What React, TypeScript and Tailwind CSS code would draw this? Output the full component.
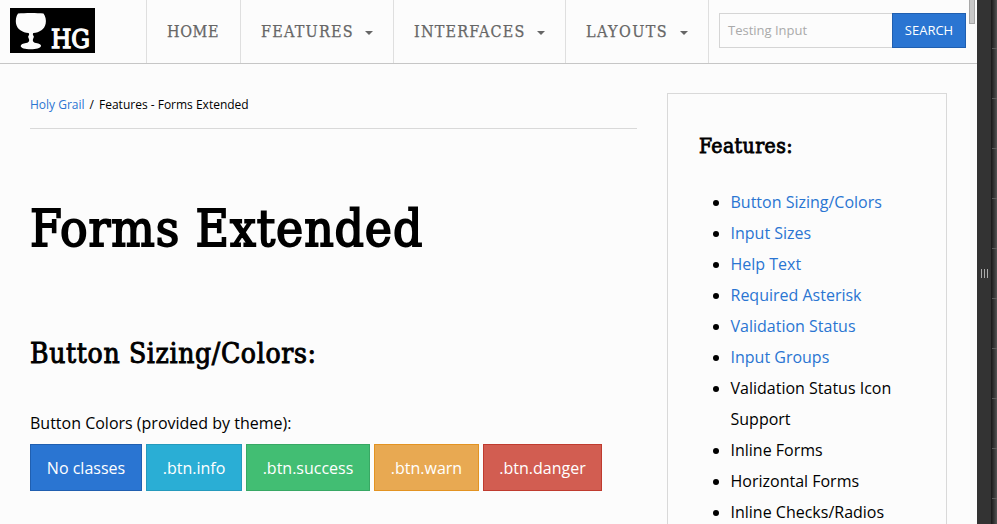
import React from "react";

const slab = "font-['Roboto_Slab','DejaVu_Serif_Condensed','DejaVu_Serif',serif] font-stretch-semi-condensed";

const nav = [
  { label: "HOME", box: "w-[94px]", text: "tracking-[0.6px]", menu: false },
  { label: "FEATURES", box: "w-[153px]", text: "tracking-[1.25px]", menu: true },
  { label: "INTERFACES", box: "w-[172px]", text: "tracking-[1.2px]", menu: true },
  { label: "LAYOUTS", box: "w-[143px]", text: "tracking-[1.4px]", menu: true },
];

const features = [
  { label: "Button Sizing/Colors", link: true },
  { label: "Input Sizes", link: true },
  { label: "Help Text", link: true },
  { label: "Required Asterisk", link: true },
  { label: "Validation Status", link: true },
  { label: "Input Groups", link: true },
  { label: "Validation Status Icon Support", link: false },
  { label: "Inline Forms", link: false },
  { label: "Horizontal Forms", link: false },
  { label: "Inline Checks/Radios", link: false },
];

const buttons = [
  { label: "No classes", style: "w-28 bg-[#2a75d2] border-[#205fb0]" },
  { label: ".btn.info", style: "w-24 bg-[#2aaed5] border-[#259abc]" },
  { label: ".btn.success", style: "w-[124px] bg-[#42be73] border-[#38a864]" },
  { label: ".btn.warn", style: "w-[105px] bg-[#e8a952] border-[#e39322]" },
  { label: ".btn.danger", style: "w-[119px] bg-[#d25d51] border-[#bf3b2f]" },
];

function Logo() {
  return (
    <div className="relative ml-[10px] mt-2 h-[45px] w-[85px] shrink-0 bg-black text-[#fcfcfc]">
      <svg className="absolute left-0 top-0" width="42" height="45" viewBox="0 0 42 45" fill="currentColor">
        <path d="M8 5.5C15 4.7 27 4.7 33.5 5.5C35.5 8.5 36.4 12 35.7 15.5C34.6 21.5 29.5 24.5 23.3 25C22.4 26.4 23 27 23.8 28.2C24 29.6 23 30.5 22.8 32C22.8 33.8 24 34.7 26 35C29.5 35.5 31.2 36.7 31 38C30.5 40.2 26 41.3 20.8 41.3C15 41.3 10.7 40 10.7 38C10.7 36.5 13 35.4 16 35C18 34.7 19.2 33.8 19.2 32C19 30.5 18 29.6 18.2 28.2C19 27 19.6 26.4 18.6 25C12.5 24.5 7 21.5 6 15.5C5.5 12 6 8.5 8 5.5Z" />
      </svg>
      <span className={`${slab} absolute left-[41px] top-[19px] text-[26px] leading-[25px] tracking-[-0.2px] [-webkit-text-stroke:1.3px_#fcfcfc]`}>HG</span>
    </div>
  );
}

function Caret() {
  return (
    <svg className="mt-[2px] shrink-0" width="8" height="4" viewBox="0 0 8 4" fill="#666">
      <path d="M0 0H8L4 4Z" />
    </svg>
  );
}

export default function App() {
  return (
    <div className="flex h-[524px] w-[997px] overflow-hidden bg-[#fcfcfc] font-['Open_Sans',sans-serif] text-base text-black">
      <div className="relative w-[977px] shrink-0">
        <header className="flex h-16 border-b border-[#c6c6c6]">
          <div className="w-[146px] shrink-0"><Logo /></div>
          <nav className={`${slab} flex border-r border-[#dfdfdf] text-[#666]`}>
            {nav.map((n) => (
              <a key={n.label} className={`${n.box} flex items-center justify-between border-l border-[#dfdfdf] pl-5 pr-5`}>
                <span className={`${n.text} whitespace-nowrap text-base [-webkit-text-stroke:0.25px_#666]`}>{n.label}</span>
                {n.menu && <Caret />}
              </a>
            ))}
          </nav>
          <div className="ml-[10px] mt-[13px] flex h-[35px]">
            <div className="flex w-[173px] items-center border border-r-0 border-[#d5d5d5] pl-2 text-[13px] text-[#aaa]">Testing Input</div>
            <div className="flex w-[74px] items-center justify-center border border-[#205fb0] bg-[#2a75d2] pt-px text-[13px] text-white">SEARCH</div>
          </div>
        </header>
        <div className="absolute right-[2px] top-[-2px] h-[26px] w-[6px] border border-[#a8a8a8] bg-[#c9c9c9]" />
        <main className="flex gap-[30px] pl-[30px] pt-[29px]">
          <section className="w-[607px]">
            <div className="flex h-9 items-start gap-[5px] border-b border-[#d9d9d9] pt-[3px] text-xs leading-[18px]">
              <a className="text-[#2a75d2]">Holy Grail</a><span>/</span><span>Features - Forms Extended</span>
            </div>
            <h1 className={`${slab} mt-[66px] whitespace-nowrap text-[51px] leading-[68px] tracking-[0.9px] [-webkit-text-stroke:1.8px_black]`}>Forms Extended</h1>
            <h2 className={`${slab} mt-[70px] whitespace-nowrap text-[28px] leading-[42px] tracking-[0.65px] [-webkit-text-stroke:0.9px_black]`}>Button Sizing/Colors:</h2>
            <p className="mt-[33px] leading-[31px]">Button Colors (provided by theme):</p>
            <div className="mt-[5px] flex gap-1">
              {buttons.map((b) => (
                <button key={b.label} className={`${b.style} h-[47px] border text-center text-white`}>{b.label}</button>
              ))}
            </div>
          </section>
          <aside className="h-[480px] w-[280px] border border-[#d9d9d9] pl-[31px] pr-[30px] pt-[35px]">
            <h3 className={`${slab} whitespace-nowrap text-[21px] leading-[34px] tracking-[0.4px] [-webkit-text-stroke:0.8px_black]`}>Features:</h3>
            <ul className="mt-6 list-disc pl-[31.5px] leading-[31px]">
              {features.map((f) => (
                <li key={f.label}>{f.link ? <a className="text-[#2a75d2]">{f.label}</a> : f.label}</li>
              ))}
            </ul>
          </aside>
        </main>
      </div>
      <div className="flex w-[14px] shrink-0 items-start justify-center gap-[2px] bg-[#333] pt-[269px]">
        <i className="h-[9px] w-px bg-[#aaa]" /><i className="h-[9px] w-px bg-[#aaa]" /><i className="h-[9px] w-px bg-[#aaa]" />
      </div>
      <div className="w-[6px] shrink-0 bg-linear-to-r from-[#181818] to-[#555]">
        <div className="ml-[1px] h-full bg-[repeating-linear-gradient(to_bottom,transparent_0px,transparent_49px,#5c5c5c_49px,#5c5c5c_50px)] bg-[position:0_-1px]" />
      </div>
    </div>
  );
}
